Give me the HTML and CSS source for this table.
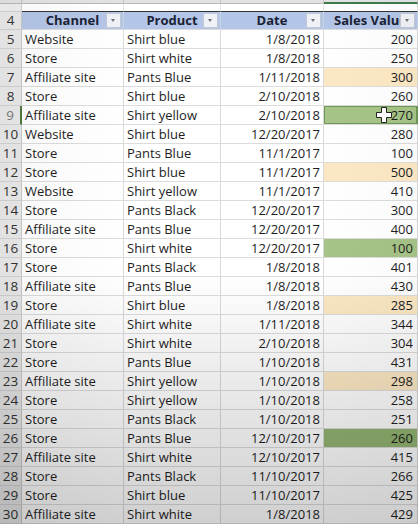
FILE: index.html
```html
<!DOCTYPE html>
<html>
<head>
<meta charset="utf-8">
<link rel="stylesheet" href="styles.css">
</head>
<body>
<div class="sheet">
  <div class="row colhead">
    <div class="c rn"></div>
    <div class="c"></div><div class="c"></div><div class="c"></div><div class="c sel"></div>
  </div>
  <div class="row gap">
    <div class="c rn"></div><div class="c"></div><div class="c"></div><div class="c"></div><div class="c"></div>
  </div>
  <div class="row head">
    <div class="c rn">4</div>
    <div class="c h"><span>Channel</span><i class="dd"></i></div>
    <div class="c h"><span>Product</span><i class="dd"></i></div>
    <div class="c h"><span>Date</span><i class="dd"></i></div>
    <div class="c h"><span>Sales Value</span><i class="dd"></i></div>
  </div>
  <div class="body" id="body"></div>
  <div class="vignette"></div>
</div>
<script src="app.js"></script>
</body>
</html>
```
FILE: app.js
```js
const data = [
[5,"Website","Shirt blue","1/8/2018",200,""],
[6,"Store","Shirt white","1/8/2018",250,""],
[7,"Affiliate site","Pants Blue","1/11/2018",300,"peach"],
[8,"Store","Shirt blue","2/10/2018",260,""],
[9,"Affiliate site","Shirt yellow","2/10/2018",270,"green active"],
[10,"Website","Shirt blue","12/20/2017",280,""],
[11,"Store","Pants Blue","11/1/2017",100,""],
[12,"Store","Shirt blue","11/1/2017",500,"peach"],
[13,"Website","Shirt yellow","11/1/2017",410,""],
[14,"Store","Pants Black","12/20/2017",300,""],
[15,"Affiliate site","Pants Blue","12/20/2017",400,""],
[16,"Store","Shirt white","12/20/2017",100,"green"],
[17,"Store","Pants Black","1/8/2018",401,""],
[18,"Affiliate site","Pants Blue","1/8/2018",430,""],
[19,"Store","Shirt blue","1/8/2018",285,"peach"],
[20,"Affiliate site","Shirt white","1/11/2018",344,""],
[21,"Store","Shirt white","2/10/2018",304,""],
[22,"Store","Pants Blue","1/10/2018",431,""],
[23,"Affiliate site","Shirt yellow","1/10/2018",298,"peach"],
[24,"Store","Shirt yellow","1/10/2018",258,""],
[25,"Store","Pants Black","1/10/2018",251,""],
[26,"Store","Pants Blue","12/10/2017",260,"green2"],
[27,"Affiliate site","Shirt white","12/10/2017",415,""],
[28,"Store","Pants Black","11/10/2017",266,""],
[29,"Store","Shirt blue","11/10/2017",425,""],
[30,"Affiliate site","Shirt white","1/8/2018",429,""]
];
const body = document.getElementById("body");
for (const [n,ch,pr,dt,v,cls] of data) {
  const r = document.createElement("div");
  r.className = "row";
  const active = cls.includes("active");
  r.innerHTML =
    `<div class="c rn${active ? " rsel" : ""}">${n}</div>` +
    `<div class="c t">${ch}</div>` +
    `<div class="c t">${pr}</div>` +
    `<div class="c num">${dt}</div>` +
    `<div class="c num ${cls}">${v}${active ? '<svg class="cursor" viewBox="0 0 16 16" width="16" height="16"><path d="M5.5 0.5h5v5h5v5h-5v5h-5v-5h-5v-5h5z" fill="#fff" stroke="#222" stroke-width="1"/></svg>' : ""}</div>`;
  body.appendChild(r);
}
```
FILE: styles.css
```css
html, body {
  margin: 0;
  padding: 0;
  background: #fff;
}
body {
  font-family: "Open Sans", "Liberation Sans", sans-serif;
  font-size: 13px;
  color: #1e1e1e;
  overflow: hidden;
}
.sheet {
  position: relative;
  width: 418px;
  height: 524px;
  overflow: hidden;
}
.row {
  display: grid;
  grid-template-columns: 22px 102px 97px 103px 94px;
  height: 19px;
}
.c {
  box-sizing: border-box;
  height: 100%;
  border-right: 1px solid #d9d9d9;
  border-bottom: 1px solid #dcdcdc;
  line-height: 18px;
  white-space: nowrap;
  overflow: hidden;
  position: relative;
}
.rn {
  background: #e9e9e9;
  border-right: 1px solid #c9c9c9;
  border-bottom: 1px solid #d2d2d2;
  text-align: center;
  color: #333;
  font-size: 13.5px;
}
.rsel {
  border-right: 2px solid #4f7a3a;
  color: #7a7a7a;
}
.t { padding-left: 3px; }
.num { text-align: right; padding-right: 3px; }
.row .num:last-child { padding-right: 4px; }

.colhead { height: 4px; }
.colhead .c {
  background: #e2e2e2;
  border-right: 1px solid #c4c4c4;
  border-bottom: 1px solid #b9b9b9;
}
.colhead .sel { border-bottom: 2px solid #3d7a4a; }
.gap { height: 7px; }
.gap .c { border-bottom: none; border-right: 1px solid #e4e4e4; }
.gap .rn { background: #eeeeee; border-right: 1px solid #cfcfcf; }

.head .c {
  border-top: 1px solid #333;
}
.head .rn { border-top: 1px solid #d2d2d2; line-height: 17px; }
.h {
  background: #b4c6e7;
  font-weight: bold;
  color: #1b2236;
  text-align: center;
  border-right: 1px solid #c9d3e6;
  line-height: 17px;
}
.h span { display: block; }
.dd {
  position: absolute;
  right: 2px;
  top: 1px;
  width: 15px;
  height: 15px;
  box-sizing: border-box;
  background: #eef1f6;
  border: 1px solid #c3c9d3;
}
.dd::after {
  content: "";
  position: absolute;
  left: 4px;
  top: 5px;
  border-left: 2.5px solid transparent;
  border-right: 2.5px solid transparent;
  border-top: 3px solid #707070;
}
.peach { background: #fce8c4; }
.green { background: #a6c487; }
.green2 { background: #93b572; }
.active {
  box-shadow: inset 0 0 0 1px #6e9856;
  border-right-color: #6e9856;
}
.cursor {
  position: absolute;
  left: 52px;
  top: 1px;
}
.vignette {
  position: absolute;
  inset: 0;
  pointer-events: none;
  background:
    linear-gradient(to bottom, rgba(0,0,0,0) 52%, rgba(0,0,0,0.08) 72%, rgba(0,0,0,0.19) 100%),
    linear-gradient(to right, rgba(0,0,0,0.03), rgba(0,0,0,0) 30%, rgba(0,0,0,0) 75%, rgba(0,0,0,0.02));
}
```
